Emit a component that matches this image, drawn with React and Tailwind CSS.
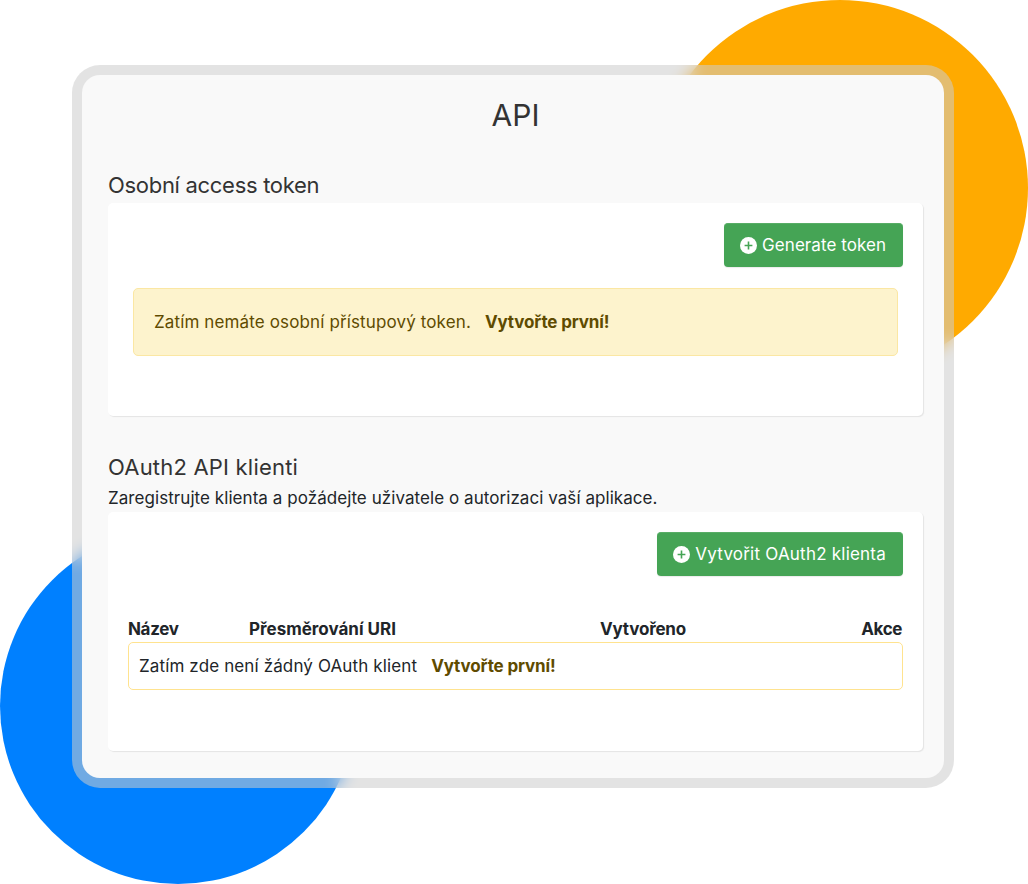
const font = "font-['Inter','Open_Sans',sans-serif]";

const PlusIcon = () => (
  <svg width="17" height="17" viewBox="0 0 17 17" className="-mt-px shrink-0">
    <circle cx="8.5" cy="8.5" r="8.5" fill="#fff" />
    <path d="M8.5 4.6v7.8M4.6 8.5h7.8" stroke="#45a455" strokeWidth="1.6" />
  </svg>
);

const GreenButton = ({ children, className }) => (
  <button className={`flex h-11 items-center gap-[5px] rounded border-t border-t-[#58ad66] bg-[#45a455] pl-4 pr-[17px] text-[17px] text-white shadow-[0_1px_1px_rgba(0,0,0,0.08)] ${className}`}>
    <PlusIcon />
    <span className="pt-px">{children}</span>
  </button>
);

const Card = ({ children, className }) => (
  <div className={`rounded-[5px] bg-white shadow-[1px_1px_1px_#e4e4e4] ${className}`}>{children}</div>
);

export default function App() {
  return (
    <div className={`relative h-[884px] w-[1028px] overflow-hidden bg-white pl-[72px] pt-[65px] text-[#212529] ${font}`}>
      {/* background circles */}
      <div className="absolute left-[652px] top-0 h-[376px] w-[376px] rounded-full bg-[#ffaa00]" />
      <div className="absolute left-0 top-[528px] h-[356px] w-[356px] rounded-full bg-[#0080ff]" />

      <div className="relative h-[723px] w-[882px] rounded-[28px] bg-[rgba(204,204,204,0.55)] p-2.5 backdrop-blur-[8px]">
        <div className="h-full rounded-[18px] bg-[#f9f9f9] pl-[26px] pr-[21px]">
          <h1 className="pt-[19px] text-center text-[30px] leading-[42px] text-[#333]">API</h1>

          <h2 className="mt-[34px] text-[22px] leading-[30px] tracking-[-0.3px] text-[#333]">Osobní access token</h2>
          <Card className="mt-[3px] h-[213px] pl-5 pr-5 pt-5">
            <div className="flex justify-end">
              <GreenButton className="tracking-[0.06px]">Generate token</GreenButton>
            </div>
            <div className="mx-[5px] mt-[21px] flex h-[68px] items-center rounded-[5px] border border-[#fbe7a3] bg-[#fdf3cd] pl-5 pt-0.5 text-[17px] tracking-[0.13px] text-[#5f4b00]">
              <span>Zatím nemáte osobní přístupový token.</span>
              <b className="ml-3.5 font-bold tracking-[-0.15px]">Vytvořte první!</b>
            </div>
          </Card>

          <h2 className="mt-[36px] text-[22px] leading-[30px] tracking-[0.2px] text-[#333]">OAuth2 API klienti</h2>
          <p className="mt-1 text-[17px] leading-6 tracking-[0.06px]">Zaregistrujte klienta a požádejte uživatele o autorizaci vaší aplikace.</p>
          <Card className="mt-0.5 h-[239px] pl-5 pr-5 pt-5">
            <div className="flex justify-end">
              <GreenButton className="tracking-[0.22px]">Vytvořit OAuth2 klienta</GreenButton>
            </div>
            <div className="mt-[42px] grid grid-cols-[121px_351px_1fr_auto] text-[17px] font-bold leading-[22px]">
              <span className="tracking-[-0.35px]">Název</span>
              <span>Přesměrování URI</span>
              <span className="tracking-[-0.2px]">Vytvořeno</span>
              <span className="pr-px tracking-[-0.4px]">Akce</span>
            </div>
            <div className="mt-0.5 flex h-12 items-center rounded-[5px] border border-[#ffe38f] pl-[10px] pt-0.5 text-[17px] tracking-[0.13px]">
              <span>Zatím zde není žádný OAuth klient</span>
              <b className="ml-3.5 font-bold tracking-[-0.15px] text-[#5f4b00]">Vytvořte první!</b>
            </div>
          </Card>
        </div>
      </div>
    </div>
  );
}
